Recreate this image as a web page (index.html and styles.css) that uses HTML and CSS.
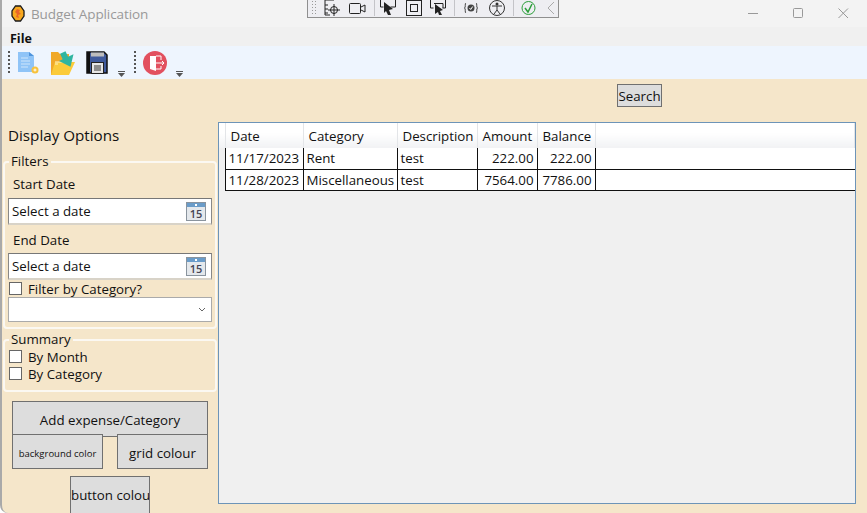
FILE: index.html
```html
<!DOCTYPE html>
<html lang="en">
<head>
  <meta charset="UTF-8">
  <title>Budget Application</title>
  <link rel="stylesheet" href="styles.css">
</head>
<body>
  <div class="window">
    <div class="titlebar">
      <svg class="app-icon" width="14" height="17" viewBox="0 0 14 17">
        <path d="M4.500 1h5l3.500 5v5l-3.500 5h-5L1 11V6z" fill="#f7a81e" stroke="#1a1a1a" stroke-width="1.300"/>
        <path d="M6 4l3 1-1 2 2 2-3 1 1 3-3-1 1-3-2-2z" fill="#e8652a"/>
      </svg>
      <span class="app-title">Budget Application</span>
      <div class="win-controls">
        <svg width="11" height="11" viewBox="0 0 11 11"><path d="M0 5.500h10" stroke="#999" fill="none"/></svg>
        <svg width="11" height="11" viewBox="0 0 11 11"><rect x="0.500" y="0.500" width="9" height="9" rx="1" stroke="#999" fill="none"/></svg>
        <svg width="11" height="11" viewBox="0 0 11 11"><path d="M0.500 0.500l9.500 9.500M10 0.500L0.500 10" stroke="#999" fill="none"/></svg>
      </div>
    </div>

    <div class="menubar"><span class="menu-item">File</span></div>

    <div class="toolbar">
      <span class="grip"></span>
      <svg class="tool" width="22" height="22" viewBox="0 0 22 22">
        <path d="M0 0h11l5 4v16H0z" fill="#8fc4f7"/>
        <path d="M11 0l5 4h-5z" fill="#4f94dc"/>
        <path d="M3 6h7M3 9h9M3 12h9M3 15h7" stroke="#cfe6fb" stroke-width="1.200"/>
        <circle cx="17" cy="18" r="3.500" fill="#f7c23c"/>
        <path d="M15.500 18h3M17 16.500v3" stroke="#fff"/>
      </svg>
      <svg class="tool tool-open" width="24" height="24" viewBox="0 0 24 24">
        <path d="M0 1h7l2 2h9v21H0z" fill="#f0a92a"/>
        <path d="M4 11h20l-6 13H0z" fill="#fbcb3a"/>
        <path d="M4 11h9M4 13h3" stroke="#fff2c0"/>
        <path d="M12 0h6v6h6l-8 10-8-10h4z" fill="#2fb5a0" transform="rotate(-25 17 8)"/>
      </svg>
      <svg class="tool tool-save" width="22" height="23" viewBox="0 0 22 23">
        <path d="M1 1h17l3 3v18H1z" fill="#3f5a9c" stroke="#111" stroke-width="1.500"/>
        <rect x="1" y="1" width="3" height="21" fill="#111"/>
        <rect x="5" y="1.500" width="13" height="4" fill="#bdbdbd"/>
        <rect x="5.500" y="11.500" width="12" height="11" fill="#e6e6e6" stroke="#222"/>
        <path d="M8 15h7M8 17h7M8 19h7" stroke="#333"/>
      </svg>
      <svg class="overflow overflow-a" width="7" height="6" viewBox="0 0 7 6"><path d="M0 0.500h7" stroke="#555"/><path d="M0 2h7L3.500 6z" fill="#555"/></svg>
      <span class="grip grip-b"></span>
      <svg class="tool tool-exit" width="24" height="24" viewBox="0 0 24 24">
        <circle cx="12" cy="12" r="12" fill="#e2505f"/>
        <path d="M7 5h6v15l-6-2z" fill="#fff"/>
        <path d="M13 5h5v4M18 15v3h-5M13 12h8M19 10l2 2-2 2" stroke="#fff" fill="none"/>
      </svg>
      <svg class="overflow" width="7" height="6" viewBox="0 0 7 6"><path d="M0 0.500h7" stroke="#555"/><path d="M0 2h7L3.500 6z" fill="#555"/></svg>
    </div>

    <div class="content">
      <div class="search-row">
        <button class="btn btn-search">Search</button>
      </div>
      <div class="main">
        <aside class="sidebar">
          <h3 class="side-title">Display Options</h3>

          <fieldset class="group group-filters">
            <legend>Filters</legend>
            <div class="field-label">Start Date</div>
            <div class="datebox">
              <span>Select a date</span>
              <svg width="20" height="19" viewBox="0 0 20 19">
                <rect x="0.500" y="0.500" width="19" height="18" fill="#e4e8ec" stroke="#8a949e"/>
                <rect x="1" y="1" width="18" height="4" fill="#6a9cc9"/>
                <rect x="9" y="2" width="2" height="2" fill="#fff"/>
                <text x="10" y="16" class="cal-num">15</text>
              </svg>
            </div>
            <div class="field-label field-label-end">End Date</div>
            <div class="datebox datebox-end">
              <span>Select a date</span>
              <svg width="20" height="19" viewBox="0 0 20 19">
                <rect x="0.500" y="0.500" width="19" height="18" fill="#e4e8ec" stroke="#8a949e"/>
                <rect x="1" y="1" width="18" height="4" fill="#6a9cc9"/>
                <rect x="9" y="2" width="2" height="2" fill="#fff"/>
                <text x="10" y="16" class="cal-num">15</text>
              </svg>
            </div>
            <label class="check"><span class="box"></span>Filter by Category?</label>
            <div class="combo">
              <svg width="8" height="6" viewBox="0 0 8 6"><path d="M1 1l3 3 3-3" stroke="#666" fill="none"/></svg>
            </div>
          </fieldset>

          <fieldset class="group group-summary">
            <legend>Summary</legend>
            <label class="check check-month"><span class="box"></span>By Month</label>
            <label class="check"><span class="box"></span>By Category</label>
          </fieldset>

          <div class="actions">
            <button class="btn btn-add">Add expense/Category</button>
            <div class="actions-row">
              <button class="btn btn-small">background color</button>
              <button class="btn btn-grid">grid colour</button>
            </div>
            <button class="btn btn-colour">button colour</button>
          </div>
        </aside>

        <div class="grid-wrap">
          <table class="grid">
            <colgroup>
              <col class="c-head"><col class="c-date"><col class="c-cat"><col class="c-desc"><col class="c-amt"><col class="c-bal"><col>
            </colgroup>
            <thead>
              <tr><th></th><th>Date</th><th>Category</th><th>Description</th><th>Amount</th><th>Balance</th><th></th></tr>
            </thead>
            <tbody>
              <tr><td class="rowhead"></td><td>11/17/2023</td><td>Rent</td><td>test</td><td class="num">222.00</td><td class="num">222.00</td><td class="fill"></td></tr>
              <tr><td class="rowhead"></td><td>11/28/2023</td><td>Miscellaneous</td><td>test</td><td class="num">7564.00</td><td class="num">7786.00</td><td class="fill"></td></tr>
            </tbody>
          </table>
        </div>
      </div>
    </div>

    <!-- debug toolbar on top of the title bar -->
    <div class="debugbar">
      <span class="debug-grip"></span>
      <svg width="16" height="18" viewBox="0 0 16 18"><path d="M1 1h9M1 1v15h5M4 6H1M4 10H1M4 14H1" stroke="#222" fill="none"/><circle cx="10" cy="11" r="3.500" stroke="#222" fill="none"/><path d="M10 5v12M4 11h12" stroke="#222"/></svg>
      <svg width="18" height="18" viewBox="0 0 18 18"><rect x="1.500" y="4.500" width="11" height="10" rx="1" stroke="#222" fill="none"/><path d="M13 8l4-2v7l-4-2" stroke="#222" fill="none"/></svg>
      <span class="debug-sep"></span>
      <svg class="dbg-select" width="16" height="18" viewBox="0 0 16 18"><path d="M0.500 0v8h3M15.500 0v8h-5" stroke="#222" fill="none"/><path d="M4 3l9 7-4 1 2 5-3 0-2-4-2 2z" fill="#222"/></svg>
      <svg width="16" height="18" viewBox="0 0 16 18"><rect x="0.500" y="1.500" width="15" height="15" stroke="#222" fill="none"/><rect x="4.500" y="5.500" width="7" height="7" stroke="#222" fill="none"/></svg>
      <svg width="16" height="18" viewBox="0 0 16 18"><path d="M0.500 0v9h3M15.500 0v9h-3M4 4.500h9V9" stroke="#222" fill="none"/><path d="M5 5l8 6-3 1 2 4h-3l-1-3-3 2z" fill="#222"/></svg>
      <span class="debug-sep"></span>
      <svg class="dbg-braces" width="14" height="18" viewBox="0 0 14 18"><circle cx="7" cy="9" r="3.500" fill="#444"/><path d="M5.500 9l1.200 1.500 2-3" stroke="#fff" fill="none"/><path d="M2 4C0.500 4 2 8.500 0.500 9 2 9.500 0.500 14 2 14M12 4c1.500 0 0 4.500 1.500 5-1.500.5 0 5-1.500 5" stroke="#444" fill="none"/></svg>
      <svg class="dbg-access" width="16" height="18" viewBox="0 0 16 18"><circle cx="8" cy="9" r="7.500" stroke="#333" fill="none"/><circle cx="8" cy="5" r="1.500" fill="#333"/><path d="M3 7h10M8 7v4l-3 4M8 11l3 4" stroke="#333" fill="none"/></svg>
      <span class="debug-sep"></span>
      <svg class="dbg-ok" width="15" height="18" viewBox="0 0 15 18"><circle cx="7.500" cy="9" r="6.500" stroke="#2c9e3a" fill="none"/><path d="M4 9l3 4 4-8" stroke="#2c9e3a" stroke-width="1.500" fill="none"/></svg>
      <svg class="debug-back" width="8" height="14" viewBox="0 0 8 14"><path d="M7 1L1 7l6 6" stroke="#aaa" fill="none"/></svg>
    </div>
  </div>
</body>
</html>
```

FILE: styles.css
```css
body {
  margin: 0;
  font-family: "Open Sans", "Noto Sans", sans-serif;
  font-size: 13.300px;
  color: #111;
}

.window {
  position: relative;
  width: 867px;
  height: 513px;
  overflow: hidden;
  display: flex;
  flex-direction: column;
  background-color: #f5e6ca;
  border-left: 2px solid #a9a9a9;
  border-radius: 0 0 0 8px;
  box-sizing: border-box;
}

/* title bar */
.titlebar {
  height: 27px;
  flex: none;
  display: flex;
  align-items: center;
  background-color: #f3f3f3;
  padding-left: 9px;
}

.app-title {
  margin-left: 6px;
  color: #999;
  font-size: 13.500px;
  letter-spacing: -0.1px;
}

.win-controls {
  margin-left: auto;
  display: flex;
  gap: 34px;
  margin-right: 18px;
}

.menubar {
  height: 19px;
  flex: none;
  background-color: #f0f0f0;
  padding-left: 8px;
  line-height: 22px;
}

.menu-item {
  font-weight: 700;
  font-size: 12.500px;
}

.toolbar {
  height: 33px;
  flex: none;
  display: flex;
  align-items: center;
  background-color: #eef5fe;
  padding-left: 6px;
}

.grip {
  width: 2px;
  height: 24px;
  background-image: linear-gradient(#555 50%, transparent 50%);
  background-size: 2px 4px;
}

.tool {
  margin-left: 8px;
}

.tool-open {
  margin-left: 11px;
}

.tool-save {
  margin-left: 11px;
}

.tool-exit {
  margin-left: 7px;
}

.overflow {
  margin: 22px 0 0 9px;
}

.overflow-a {
  margin-left: 10px;
  margin-right: 9px;
}

/* main part */
.content {
  flex: 1;
  display: flex;
  flex-direction: column;
  min-height: 0;
}

.search-row {
  height: 43px;
  flex: none;
  padding: 5px 0 0 615px;
  box-sizing: border-box;
}

.btn {
  display: block;
  box-sizing: border-box;
  background-color: #dddddd;
  border: 1px solid #707070;
  color: #111;
  font-family: inherit;
  font-size: 13.300px;
  padding: 0;
  white-space: nowrap;
  overflow: hidden;
}

.btn-search {
  width: 45px;
  height: 23px;
}

.main {
  flex: 1;
  display: flex;
  min-height: 0;
}

.sidebar {
  width: 216px;
  flex: none;
}

.side-title {
  margin: 3px 0 0 6px;
  font-size: 15.200px;
  font-weight: 400;
  line-height: 20px;
}

.group {
  margin: 0 0 0 1px;
  padding: 0 3px;
  width: 214px;
  box-sizing: border-box;
  border: 2px solid #fbf8f2;
  border-radius: 4px;
}

.group legend {
  margin-left: 1px;
  padding: 0 2px;
  line-height: 15px;
}

.group-filters {
  height: 175px;
  margin-top: 9px;
}

.group-summary {
  height: 60px;
  margin-top: 3px;
}

.field-label {
  padding-left: 5px;
  line-height: 20px;
  margin-top: 5px;
}

.field-label-end {
  margin-top: 6px;
  line-height: 19px;
}

.datebox {
  display: flex;
  align-items: center;
  justify-content: space-between;
  height: 27px;
  margin-top: 4px;
  padding: 0 5px 0 3px;
  box-sizing: border-box;
  background-color: #fff;
  border: 1px solid #888;
  border-bottom: 2px solid #d8d3c8;
  border-top-color: #777;
}

.datebox-end {
  margin-top: 3px;
}

.cal-num {
  font-size: 11px;
  font-weight: 600;
  text-anchor: middle;
  fill: #445;
}

.check {
  display: flex;
  align-items: center;
  height: 17px;
}

.check-month {
  margin-top: 1px;
}

.box {
  width: 13px;
  height: 13px;
  margin: 0 6px 0 1px;
  box-sizing: border-box;
  background-color: #fff;
  border: 1px solid #666;
}

.combo {
  display: flex;
  align-items: center;
  justify-content: flex-end;
  height: 25px;
  padding-right: 5px;
  box-sizing: border-box;
  background-color: #fff;
  border: 1px solid #aaa;
}

.actions {
  margin: 9px 0 0 10px;
  width: 196px;
}

.btn-add {
  width: 196px;
  height: 36px;
  padding-top: 2px;
}

.actions-row {
  display: flex;
  justify-content: space-between;
  margin-top: -3px;
}

.btn-small {
  width: 91px;
  height: 35px;
  padding-top: 3px;
  font-size: 9.500px;
}

.btn-grid {
  width: 91px;
  height: 35px;
  padding-top: 2px;
}

.btn-colour {
  width: 80px;
  height: 38px;
  margin: 7px 0 0 58px;
  text-align: left;
}

/* data grid */
.grid-wrap {
  width: 638px;
  height: 382px;
  box-sizing: border-box;
  background-color: #f0f0f0;
  border: 1px solid #6d94b8;
}

.grid {
  width: 100%;
  table-layout: fixed;
  border-collapse: collapse;
  font-size: 13.300px;
}

.c-head { width: 6px; }
.c-date { width: 78px; }
.c-cat { width: 94px; }
.c-desc { width: 80px; }
.c-amt { width: 60px; }
.c-bal { width: 58px; }

.grid th {
  height: 25px;
  padding: 0 0 0 5px;
  box-sizing: border-box;
  font-weight: 400;
  text-align: left;
  white-space: nowrap;
  background: linear-gradient(#fff 40%, #f1f2f4);
  border-right: 1px solid #e3e5e8;
}

.grid td {
  height: 21px;
  padding: 0 2px 0 3px;
  box-sizing: border-box;
  background-color: #fff;
  white-space: nowrap;
  overflow: hidden;
  border-right: 1px solid #111;
  border-bottom: 1px solid #111;
}

.grid td.rowhead {
  background-color: #f0f0f0;
  border-bottom: 0;
}

.grid td.fill {
  border-right: 0;
}

.grid td.num {
  text-align: right;
  padding-right: 3px;
}

/* debug toolbar */
.debugbar {
  position: absolute;
  left: 305px;
  top: -1px;
  width: 252px;
  height: 19px;
  box-sizing: border-box;
  display: flex;
  align-items: center;
  gap: 8px;
  background-color: #eeeef2;
  border: 1px solid #8f8f8f;
  border-top: 0;
  padding-left: 3px;
}

.debug-grip {
  width: 5px;
  height: 16px;
  background-image: radial-gradient(#999 40%, transparent 45%);
  background-size: 3px 3px;
}

.debug-sep {
  width: 1px;
  height: 16px;
  background-color: #c4c4c8;
}

.dbg-select {
  margin: 0 2px 0 -3px;
}

.dbg-braces {
  margin-left: 1px;
}

.dbg-access {
  margin-left: 3px;
}

.dbg-ok {
  margin-left: -1px;
}

.debug-back {
  margin-left: 3px;
}
```
